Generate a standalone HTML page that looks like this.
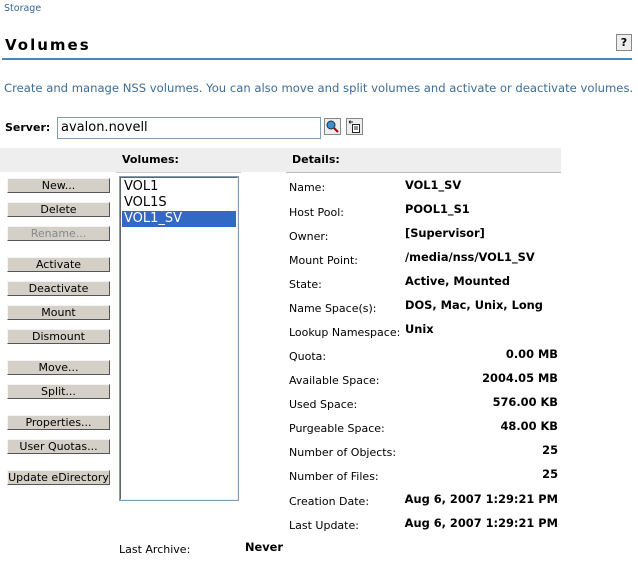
<!DOCTYPE html>
<html><head><style>
body{margin:0;width:638px;height:562px;background:#fff;font-family:"DejaVu Sans","Liberation Sans",sans-serif;position:relative;overflow:hidden;color:#000}
.a{position:absolute;white-space:nowrap}
.btn{position:absolute;left:7px;width:101px;height:13px;background:#d4d0c8;border:1px solid;border-color:#f4f4f4 #555 #555 #f4f4f4;font-size:11px;line-height:13px;text-align:center}
.l{position:absolute;left:289px;font-size:11px}
.v{position:absolute;font-size:11.4px;font-weight:bold}
.r{right:80px;text-align:right}
</style></head><body>
<div class="a" style="left:4px;top:3px;font-size:9.5px;color:#336699">Storage</div>
<div class="a" style="left:5px;top:36px;font-size:15px;font-weight:bold;letter-spacing:2px">Volumes</div>
<div class="a" style="left:616px;top:34px;width:14px;height:15px;border:1px solid #888;background:#eee;font-size:11px;font-weight:bold;text-align:center;line-height:15px">?</div>
<div class="a" style="left:2px;top:58px;width:630px;height:2px;background:#4a86b8"></div>
<div class="a" style="left:4px;top:81px;font-size:11.6px;color:#3d6e97">Create and manage NSS volumes. You can also move and split volumes and activate or deactivate volumes.</div>
<div class="a" style="left:5px;top:121px;font-size:11px;font-weight:bold">Server:</div>
<div class="a" style="left:57px;top:117px;border:1px solid #7f9db9;font-size:13px;line-height:20px;padding-left:3px;box-sizing:border-box;width:264px;height:22px">avalon.novell</div>
<svg class="a" style="left:324px;top:118px" width="40" height="18">
<rect x="0.5" y="0.5" width="16" height="16" fill="#eee" stroke="#888"/>
<circle cx="7" cy="7" r="4" fill="#3a8fd0" stroke="#234" stroke-width="1"/>
<line x1="10" y1="10" x2="14" y2="14" stroke="#a00" stroke-width="2"/>
<rect x="22.5" y="0.5" width="16" height="16" fill="#eee" stroke="#888"/>
<rect x="28.5" y="6.5" width="7" height="8" fill="#fff" stroke="#222"/>
<line x1="30" y1="9" x2="34" y2="9" stroke="#222"/><line x1="30" y1="11" x2="34" y2="11" stroke="#222"/>
<path d="M25 4 L29 4 M25 4 L26.5 2.5 M25 4 L26.5 5.5" stroke="#222" fill="none"/>
</svg>
<div class="a" style="left:0;top:148px;width:561px;height:24px;background:#eeeeee"></div>
<div class="a" style="left:286px;top:172px;width:275px;height:1px;background:#bbb"></div>
<div class="a" style="left:116px;top:172px;width:125px;height:1px;background:#ccc"></div>
<div class="a" style="left:122px;top:153px;font-size:11px;font-weight:bold">Volumes:</div>
<div class="a" style="left:292px;top:153px;font-size:11px;font-weight:bold">Details:</div>
<div class="btn" style="top:178px">New...</div>
<div class="btn" style="top:202px">Delete</div>
<div class="btn" style="top:226px;color:#888">Rename...</div>
<div class="btn" style="top:257px">Activate</div>
<div class="btn" style="top:281px">Deactivate</div>
<div class="btn" style="top:305px">Mount</div>
<div class="btn" style="top:329px">Dismount</div>
<div class="btn" style="top:360px">Move...</div>
<div class="btn" style="top:384px">Split...</div>
<div class="btn" style="top:415px">Properties...</div>
<div class="btn" style="top:439px">User Quotas...</div>
<div class="btn" style="top:470px">Update eDirectory</div>
<div class="a" style="left:119px;top:176px;width:118px;height:323px;border:1px solid #7f9db9"></div>
<div class="a" style="left:120px;top:177px;width:116px;height:321px;border:1px solid;border-color:#666 #eee #eee #666"></div>
<div class="a" style="left:122px;top:179px;width:114px;font-size:13px;line-height:16px">
<div style="padding-left:2px">VOL1</div><div style="padding-left:2px">VOL1S</div><div style="padding-left:2px;background:#316ac5;color:#fff">VOL1_SV</div></div>
<div class="l" style="top:181px">Name:</div><div class="v" style="left:405px;top:178px">VOL1_SV</div>
<div class="l" style="top:206px">Host Pool:</div><div class="v" style="left:405px;top:202px">POOL1_S1</div>
<div class="l" style="top:230px">Owner:</div><div class="v" style="left:405px;top:226px">[Supervisor]</div>
<div class="l" style="top:254px">Mount Point:</div><div class="v" style="left:405px;top:250px">/media/nss/VOL1_SV</div>
<div class="l" style="top:278px">State:</div><div class="v" style="left:405px;top:274px">Active, Mounted</div>
<div class="l" style="top:302px">Name Space(s):</div><div class="v" style="left:405px;top:298px">DOS, Mac, Unix, Long</div>
<div class="l" style="top:326px">Lookup Namespace:</div><div class="v" style="left:405px;top:322px">Unix</div>
<div class="l" style="top:350px">Quota:</div><div class="v r" style="top:347px">0.00 MB</div>
<div class="l" style="top:374px">Available Space:</div><div class="v r" style="top:371px">2004.05 MB</div>
<div class="l" style="top:398px">Used Space:</div><div class="v r" style="top:395px">576.00 KB</div>
<div class="l" style="top:422px">Purgeable Space:</div><div class="v r" style="top:419px">48.00 KB</div>
<div class="l" style="top:446px">Number of Objects:</div><div class="v r" style="top:443px">25</div>
<div class="l" style="top:470px">Number of Files:</div><div class="v r" style="top:467px">25</div>
<div class="l" style="top:495px">Creation Date:</div><div class="v r" style="top:492px">Aug 6, 2007 1:29:21 PM</div>
<div class="l" style="top:519px">Last Update:</div><div class="v r" style="top:516px">Aug 6, 2007 1:29:21 PM</div>
<div class="l" style="left:119px;top:543px">Last Archive:</div><div class="v" style="left:245px;top:540px">Never</div>
</body></html>
